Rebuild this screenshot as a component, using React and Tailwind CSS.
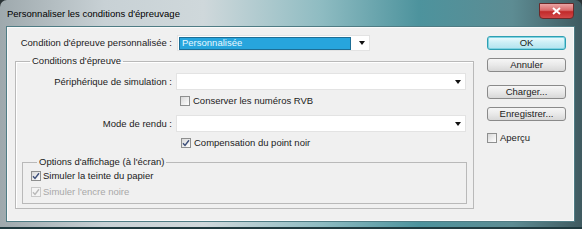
import React from "react";

const Check = ({ checked, disabled }) => (
  <span
    className={
      "flex h-[10px] w-[10px] shrink-0 items-center justify-center border " +
      (disabled
        ? "border-[#c9c9c9] bg-[#f4f4f4]"
        : "border-[#8e8f8f] bg-[linear-gradient(135deg,#d8d8d8,#ffffff)]")
    }
  >
    {checked && (
      <svg width="8" height="8" viewBox="0 0 8 8">
        <path
          d="M1 4.2 L3 6.4 L7 1.2"
          fill="none"
          stroke={disabled ? "#b9b9b9" : "#3d4f7a"}
          strokeWidth="1.4"
        />
      </svg>
    )}
  </span>
);

const Arrow = () => (
  <svg width="6" height="4" viewBox="0 0 6 4">
    <path d="M0 0 L6 0 L3 4 Z" fill="#111" />
  </svg>
);

const Btn = ({ children, def, className }) => (
  <div
    className={
      "flex h-[14px] w-[79px] items-center justify-center rounded-[3px] border text-[9.5px] leading-none " +
      (def
        ? "border-[#2e9fb2] bg-[linear-gradient(#eefbfd,#c9eef5_50%,#b2e3ee)] shadow-[inset_0_0_0_1px_#7fd3e2] "
        : "border-[#8a8a8a] bg-[linear-gradient(#f6f6f6,#e9e9e9_50%,#d8d8d8)] ") +
      (className || "")
    }
  >
    {children}
  </div>
);

const App = () => {
  return (
    <div
      className="h-[229px] w-[582px] overflow-hidden bg-[#2a3336] text-[#1b1b1b]"
      style={{ fontFamily: '"Liberation Sans", Arial, sans-serif' }}
    >
      <div className="flex h-full flex-col rounded-t-[7px] border-b-[2px] border-[#1f3a3f] bg-[linear-gradient(to_right,#9ea9ad,#c8d1d5_18%,#cfd8db_35%,#8fbcc2_55%,#4d939d_72%,#5d8c93_88%,#3f5a60)] pb-[5px] pl-[6px] pr-[7px]">
        <div className="flex h-[26px] items-start justify-between">
          <div className="pl-[1px] pt-[9px] text-[9.5px] leading-none text-black">
            Personnaliser les conditions d'épreuvage
          </div>
          <div className="mr-[1px] mt-[3px] flex h-[16px] w-[35px] items-center justify-center rounded-b-[4px] border border-[#6b2a2a] bg-[linear-gradient(#eaa3a3,#d96a6a_45%,#c12a2a_55%,#d24848)]">
            <svg width="9" height="8" viewBox="0 0 9 8">
              <path d="M1 1 L8 7 M8 1 L1 7" stroke="#fff" strokeWidth="2" />
            </svg>
          </div>
        </div>

        <div className="flex flex-1 border border-[#4f7c84] bg-[#f0f0f0] shadow-[inset_0_0_0_1px_#fafafa]">
          {/* left column */}
          <div className="ml-[8px] w-[459px] pt-[8px]">
            <div className="flex h-[16px] items-center">
              <div className="w-[157px] whitespace-nowrap text-right text-[9.5px] leading-none">
                Condition d'épreuve personnalisée :
              </div>
              <div className="ml-[5px] flex h-[16px] w-[193px] items-center border border-[#e3e3e3] bg-white pl-[1px] pr-[4px]">
                <div className="flex h-[13px] flex-1 items-center border border-[#1d6e96] bg-[#27a5dd] pl-[2px] text-[9.5px] leading-none text-[#e8f8ff]">
                  Personnalisée
                </div>
                <div className="ml-[8px]">
                  <Arrow />
                </div>
              </div>
            </div>

            <fieldset className="mt-[4px] h-[154px] border border-[#b9b9b9] p-0 shadow-[inset_1px_1px_0_#fff]">
              <legend className="ml-[14px] px-[2px] text-[9.5px] leading-[12px]">
                Conditions d'épreuve
              </legend>

              <div className="mt-[6px] flex h-[17px] items-center">
                <div className="w-[156px] whitespace-nowrap text-right text-[9.5px] leading-none">
                  Périphérique de simulation :
                </div>
                <div className="ml-[4px] flex h-[17px] w-[290px] items-center justify-end border border-[#e3e3e3] bg-white pr-[4px]">
                  <Arrow />
                </div>
              </div>

              <div className="mt-[4px] flex h-[14px] items-center pl-[164px]">
                <Check />
                <span className="ml-[3px] text-[9.5px] leading-none">
                  Conserver les numéros RVB
                </span>
              </div>

              <div className="mt-[7px] flex h-[17px] items-center">
                <div className="w-[156px] whitespace-nowrap text-right text-[9.5px] leading-none">
                  Mode de rendu :
                </div>
                <div className="ml-[4px] flex h-[17px] w-[290px] items-center justify-end border border-[#e3e3e3] bg-white pr-[4px]">
                  <Arrow />
                </div>
              </div>

              <div className="mt-[4px] flex h-[14px] items-center pl-[165px]">
                <Check checked />
                <span className="ml-[3px] text-[9.5px] leading-none">
                  Compensation du point noir
                </span>
              </div>

              <fieldset className="ml-[6px] mt-[6px] h-[48px] w-[445px] border border-[#b9b9b9] p-0">
                <legend className="ml-[14px] px-[2px] text-[9.5px] leading-[12px]">
                  Options d'affichage (à l'écran)
                </legend>
                <div className="mt-[1px] flex h-[14px] items-center pl-[8px]">
                  <Check checked />
                  <span className="ml-[2px] text-[9.5px] leading-none">
                    Simuler la teinte du papier
                  </span>
                </div>
                <div className="mt-[2px] flex h-[14px] items-center pl-[8px]">
                  <Check checked disabled />
                  <span className="ml-[2px] text-[9.5px] leading-none text-[#a8a8a8]">
                    Simuler l'encre noire
                  </span>
                </div>
              </fieldset>
            </fieldset>
          </div>

          {/* right column */}
          <div className="ml-[13px] flex w-[79px] flex-col pt-[9px]">
            <Btn def>OK</Btn>
            <Btn className="mt-[8px]">Annuler</Btn>
            <Btn className="mt-[13px]">Charger...</Btn>
            <Btn className="mt-[8px]">Enregistrer...</Btn>
            <div className="mt-[12px] flex items-center">
              <Check />
              <span className="ml-[3px] text-[9.5px] leading-none">Aperçu</span>
            </div>
          </div>
        </div>
      </div>
    </div>
  );
};

export default App;
